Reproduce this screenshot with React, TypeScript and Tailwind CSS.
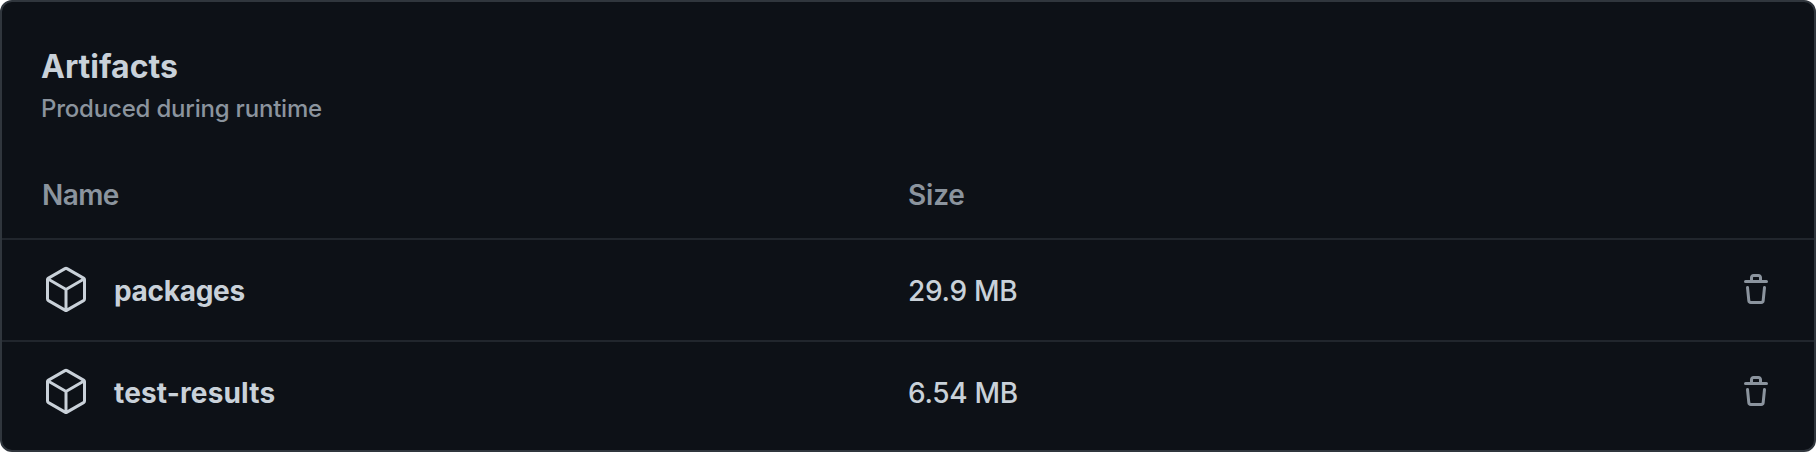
import React from "react";

function PackageIcon() {
  return (
    <svg viewBox="0 0 24 24" className="size-12 shrink-0" fill="#c9d1d9" aria-hidden="true">
      <path d="M12.876.64V.639l8.25 4.763c.541.313.875.89.875 1.515v9.525a1.75 1.75 0 0 1-.875 1.516l-8.25 4.762a1.748 1.748 0 0 1-1.75 0l-8.25-4.763a1.75 1.75 0 0 1-.875-1.515V6.917c0-.625.334-1.202.875-1.515L11.126.64a1.748 1.748 0 0 1 1.75 0Zm-1 1.298L4.251 6.34l7.75 4.474 7.75-4.474-7.625-4.402a.248.248 0 0 0-.25 0Zm.875 19.123 7.625-4.402a.25.25 0 0 0 .125-.216V7.639l-7.75 4.474ZM3.501 7.64v8.803c0 .09.048.172.125.216l7.625 4.402v-8.947Z" />
    </svg>
  );
}

function TrashIcon() {
  return (
    <svg viewBox="0 0 16 16" className="size-8" fill="#8b949e" aria-hidden="true">
      <path d="M11 1.75V3h2.25a.75.75 0 0 1 0 1.5H2.75a.75.75 0 0 1 0-1.5H5V1.75C5 .784 5.784 0 6.75 0h2.5C10.216 0 11 .784 11 1.75ZM4.496 6.675l.66 6.6a.25.25 0 0 0 .249.225h5.19a.25.25 0 0 0 .249-.225l.66-6.6a.75.75 0 0 1 1.492.149l-.66 6.6A1.748 1.748 0 0 1 10.595 15h-5.19a1.75 1.75 0 0 1-1.741-1.575l-.66-6.6a.75.75 0 1 1 1.492-.15ZM6.5 1.75V3h3V1.75a.25.25 0 0 0-.25-.25h-2.5a.25.25 0 0 0-.25.25Z" />
    </svg>
  );
}

const artifacts = [
  { name: "packages", size: "29.9 MB", tracking: "tracking-[-0.3px]" },
  { name: "test-results", size: "6.54 MB", tracking: "tracking-[0.15px]" },
];

export default function App() {
  return (
    <section className="h-[452px] w-[1816px] overflow-hidden rounded-xl border-2 border-[#30363d] bg-[#0d1117] font-['Inter',sans-serif] text-[28px] text-[#c9d1d9]">
      <header className="pt-[41px] pr-10 pl-[39px]">
        <h2 className="text-[32px] leading-12 font-bold">Artifacts</h2>
        <p className="text-2xl leading-9 font-medium tracking-[-0.2px] text-[#8b949e]">Produced during runtime</p>
      </header>
      <div className="mt-[47px] grid h-16 grid-cols-[866px_1fr] px-10 leading-[42px] font-semibold tracking-[-0.6px] text-[#8b949e]">
        <span>Name</span>
        <span className="tracking-[-0.2px]">Size</span>
      </div>
      {artifacts.map((artifact) => (
        <div key={artifact.name} className="grid h-[102px] grid-cols-[866px_1fr_auto] items-center border-t-2 border-[#21262d] pr-[38px] pl-10">
          <div className="flex items-center gap-6">
            <PackageIcon />
            <span className={`pt-0.5 font-bold ${artifact.tracking}`}>{artifact.name}</span>
          </div>
          <span className="pt-0.5 font-medium tracking-[-0.3px]">{artifact.size}</span>
          <button className="p-1" aria-label={`Delete ${artifact.name}`}>
            <TrashIcon />
          </button>
        </div>
      ))}
    </section>
  );
}
